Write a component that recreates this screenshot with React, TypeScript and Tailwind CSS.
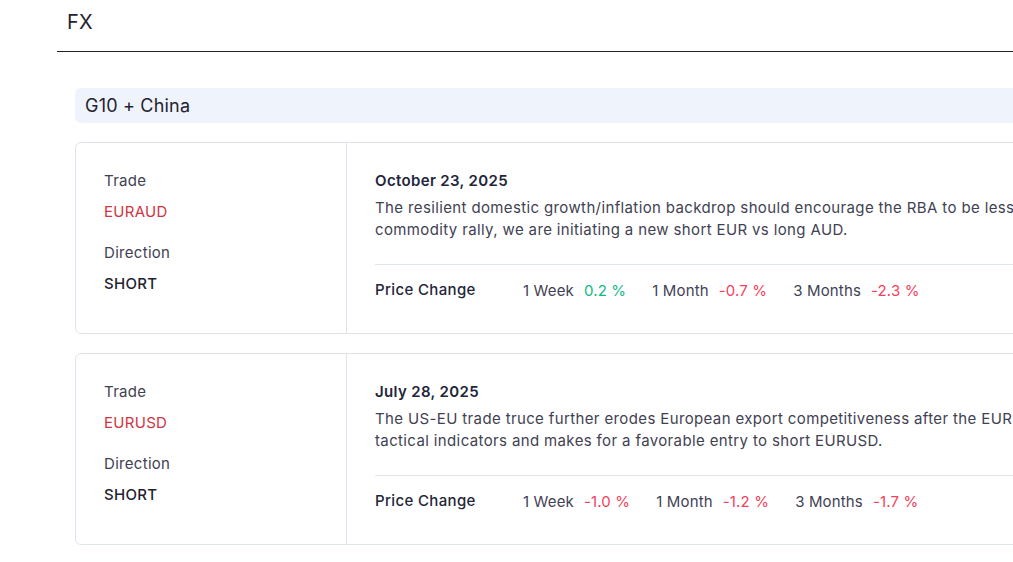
const trades = [
  {
    pair: "EURAUD",
    direction: "SHORT",
    date: "October 23, 2025",
    lines: [
      "The resilient domestic growth/inflation backdrop should encourage the RBA to be less dovish than expected, and alongside the",
      "commodity rally, we are initiating a new short EUR vs long AUD.",
    ],
    changes: [
      { label: "1 Week", value: 0.2 },
      { label: "1 Month", value: -0.7 },
      { label: "3 Months", value: -2.3 },
    ],
  },
  {
    pair: "EURUSD",
    direction: "SHORT",
    date: "July 28, 2025",
    lines: [
      "The US-EU trade truce further erodes European export competitiveness after the EUR rally, which is stretched on our",
      "tactical indicators and makes for a favorable entry to short EURUSD.",
    ],
    changes: [
      { label: "1 Week", value: -1.0 },
      { label: "1 Month", value: -1.2 },
      { label: "3 Months", value: -1.7 },
    ],
  },
];

function TradeCard({ trade }: { trade: (typeof trades)[number] }) {
  return (
    <div className="flex rounded-md border border-[#dfe3f0] bg-white">
      <div className="w-[271px] shrink-0 border-r border-[#dfe3f0] px-7 pt-[27px] pb-6 tracking-[0.3px]">
        <p className="text-[15px] leading-[22px] text-[#3f4252]">Trade</p>
        <p className="mt-[9px] text-[15px] leading-[22px] text-[#d0343f]">
          {trade.pair}
        </p>
        <p className="mt-[19px] text-[15px] leading-[22px] text-[#3f4252]">
          Direction
        </p>
        <p className="mt-[9px] text-[15px] font-medium leading-[22px] text-[#1f2230]">
          {trade.direction}
        </p>
      </div>
      <div className="flex-1 px-7 pt-[27px] pb-[31px]">
        <p className="text-[15px] font-semibold leading-[22px] tracking-[0.35px] text-[#23263a]">
          {trade.date}
        </p>
        <p className="mt-[5px] whitespace-nowrap text-[15px] leading-[22px] tracking-[0.37px] text-[#3f4252]">
          {trade.lines[0]}
          <br />
          {trade.lines[1]}
        </p>
        <div className="mt-[23px] flex items-center border-t border-[#e1e4f2] pt-[12px]">
          <p className="w-[148px] text-[15px] font-medium leading-[22px] tracking-[0.35px] text-[#23263a]">
            Price Change
          </p>
          <div className="flex gap-[26px] pt-[3px] tracking-[0.15px]">
            {trade.changes.map((c) => (
              <div key={c.label} className="flex gap-[10px] text-[15px] leading-[22px]">
                <span className="text-[#3f4255]">{c.label}</span>
                <span
                  className={
                    c.value >= 0 ? "text-[#12b886]" : "text-[#f43f5e]"
                  }
                >
                  {c.value.toFixed(1)} %
                </span>
              </div>
            ))}
          </div>
        </div>
      </div>
    </div>
  );
}

export default function App() {
  return (
    <div className="h-[562px] w-[1013px] overflow-hidden bg-white font-['Inter',sans-serif]">
      <div className="ml-[57px] w-[1200px]">
        <header className="flex h-[52px] items-center border-b border-[#1f2330] px-[10px] pb-[8px]">
          <h1 className="text-[20px] tracking-[0.3px] text-[#1f2230]">FX</h1>
        </header>

        <section className="ml-[18px] mt-[36px] flex flex-col gap-[19px]">
          <h2 className="rounded-md bg-[#eff3fb] px-[10px] py-[6px] text-[18px] leading-[23px] tracking-[0.2px] text-[#1f2230]">
            G10 + China
          </h2>
          {trades.map((t) => (
            <TradeCard key={t.pair} trade={t} />
          ))}
        </section>
      </div>
    </div>
  );
}
